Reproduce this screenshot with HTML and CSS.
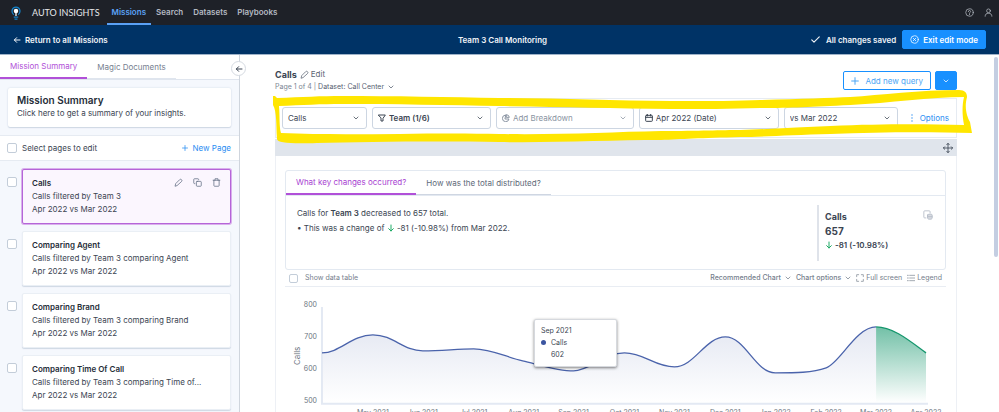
FILE: index.html
```
<!DOCTYPE html>
<html lang="en">
<head>
    <meta charset="UTF-8">
    <meta name="viewport" content="width=device-width, initial-scale=1.0">
    <title>Team 3 Call Monitoring</title>
    <link rel="stylesheet" href="styles.css">
</head>
<body>
    <svg class="sprite" aria-hidden="true">
        <symbol id="chevron" viewBox="0 0 24 24"><path d="M4 8l8 8 8-8"/></symbol>
        <symbol id="pencil" viewBox="0 0 24 24"><path d="M3 21l1.500-6L15 4.500a3.500 3.500 0 0 1 5 5L9 19.500z"/></symbol>
        <symbol id="arrow-left" viewBox="0 0 24 24"><path d="M21 12H4M11 5l-7 7 7 7"/></symbol>
        <symbol id="arrow-down" viewBox="0 0 24 24"><path d="M12 3v18M5 14l7 7 7-7"/></symbol>
        <symbol id="plus" viewBox="0 0 24 24"><path d="M12 2v20M2 12h20"/></symbol>
    </svg>

    <header class="topbar">
        <svg class="logo" viewBox="0 0 20 28" aria-hidden="true">
            <path d="M5.500 17.500C0 13 1 2 10 2s10 11 4.500 15.500" fill="none" stroke="#1482c8" stroke-width="2.500"/>
            <circle cx="10" cy="10" r="4.500" fill="#fff"/>
            <path d="M10 12v8" stroke="#fff" stroke-width="2.500"/>
            <path d="M5.500 22h9M7 26h6" stroke="#1482c8" stroke-width="2.500"/>
        </svg>
        <span class="brand">AUTO INSIGHTS</span>
        <nav class="nav">
            <a href="#" class="active">Missions</a>
            <a href="#">Search</a>
            <a href="#">Datasets</a>
            <a href="#">Playbooks</a>
        </nav>
        <div class="topbar-icons">
            <button type="button" aria-label="Help">
                <svg class="icon icon-m" viewBox="0 0 24 24"><circle cx="12" cy="12" r="10"/><path d="M9 9.500a3 3 0 1 1 4.500 2.500c-1 .6-1.500 1-1.500 2.200M12 17v1"/></svg>
            </button>
            <button type="button" aria-label="Account">
                <svg class="icon icon-m" viewBox="0 0 24 24"><circle cx="12" cy="7.500" r="5"/><path d="M3 22c0-5 3-8 9-8s9 3 9 8"/></svg>
            </button>
        </div>
    </header>

    <div class="missionbar">
        <a href="#" class="back"><svg class="icon icon-s"><use href="#arrow-left"/></svg>Return to all Missions</a>
        <h1>Team 3 Call Monitoring</h1>
        <div class="mission-actions">
            <span class="saved"><svg class="icon icon-m saved-tick" viewBox="0 0 24 24"><path d="M2 13l6 6L22 5"/></svg>All changes saved</span>
            <button type="button" class="btn btn-primary">
                <svg class="icon icon-m" viewBox="0 0 24 24"><circle cx="12" cy="12" r="10"/><path d="M8.500 8.500l7 7M15.500 8.500l-7 7"/></svg>Exit edit mode
            </button>
        </div>
    </div>

    <div class="layout">
        <aside class="sidebar">
            <button type="button" class="collapse" aria-label="Collapse sidebar"><svg class="icon icon-s"><use href="#arrow-left"/></svg></button>
            <div class="side-tabs">
                <button type="button" class="active">Mission Summary</button>
                <button type="button">Magic Documents</button>
            </div>
            <div class="summary">
                <a href="#" class="summary-card">
                    <strong>Mission Summary</strong>
                    <span>Click here to get a summary of your insights.</span>
                </a>
            </div>
            <div class="select-row">
                <label><input type="checkbox" class="check">Select pages to edit</label>
                <button type="button" class="link"><svg class="icon icon-xs"><use href="#plus"/></svg>New Page</button>
            </div>
            <ul class="pages">
                <li>
                    <input type="checkbox" class="check" aria-label="Select Calls">
                    <div class="page-card selected">
                        <h2>Calls</h2>
                        <p>Calls filtered by Team 3</p>
                        <p>Apr 2022 vs Mar 2022</p>
                        <div class="page-tools">
                            <button type="button" aria-label="Edit page"><svg class="icon icon-m"><use href="#pencil"/></svg></button>
                            <button type="button" aria-label="Duplicate page"><svg class="icon icon-m" viewBox="0 0 24 24"><rect x="9" y="9" width="13" height="13" rx="2"/><path d="M5 15H4a2 2 0 0 1-2-2V4a2 2 0 0 1 2-2h9a2 2 0 0 1 2 2v1"/></svg></button>
                            <button type="button" aria-label="Delete page"><svg class="icon icon-m" viewBox="0 0 24 24"><path d="M3 6h18M5 6v14a2 2 0 0 0 2 2h10a2 2 0 0 0 2-2V6M8 6V2h8v4"/></svg></button>
                        </div>
                    </div>
                </li>
                <li>
                    <input type="checkbox" class="check" aria-label="Select Comparing Agent">
                    <div class="page-card">
                        <h2>Comparing Agent</h2>
                        <p>Calls filtered by Team 3 comparing Agent</p>
                        <p>Apr 2022 vs Mar 2022</p>
                    </div>
                </li>
                <li>
                    <input type="checkbox" class="check" aria-label="Select Comparing Brand">
                    <div class="page-card">
                        <h2>Comparing Brand</h2>
                        <p>Calls filtered by Team 3 comparing Brand</p>
                        <p>Apr 2022 vs Mar 2022</p>
                    </div>
                </li>
                <li>
                    <input type="checkbox" class="check" aria-label="Select Comparing Time Of Call">
                    <div class="page-card">
                        <h2>Comparing Time Of Call</h2>
                        <p>Calls filtered by Team 3 comparing Time of...</p>
                        <p>Apr 2022 vs Mar 2022</p>
                    </div>
                </li>
            </ul>
        </aside>

        <main class="content">
            <div class="page-head">
                <div>
                    <div class="page-title">
                        <h2>Calls</h2>
                        <button type="button"><svg class="icon icon-m"><use href="#pencil"/></svg>Edit</button>
                    </div>
                    <div class="page-meta">Page 1 of 4 | <button type="button">Dataset: Call Center <svg class="icon icon-xs"><use href="#chevron"/></svg></button></div>
                </div>
                <div class="head-actions">
                    <button type="button" class="btn btn-outline"><svg class="icon icon-s"><use href="#plus"/></svg>Add new query</button>
                    <button type="button" class="btn btn-primary btn-more" aria-label="More"><svg class="icon icon-xs"><use href="#chevron"/></svg></button>
                </div>
            </div>

            <div class="query">
                <div class="field field-measure">
                    <select aria-label="Measure"><option>Calls</option></select>
                    <svg class="icon icon-xs"><use href="#chevron"/></svg>
                </div>
                <div class="field field-segment">
                    <svg class="icon icon-s" viewBox="0 0 24 24"><path d="M2 3h20l-7 10v8h-6v-8z"/></svg>
                    <select aria-label="Segment"><option>Team (1/6)</option></select>
                    <svg class="icon icon-xs"><use href="#chevron"/></svg>
                </div>
                <div class="field field-breakdown">
                    <svg class="icon icon-s" viewBox="0 0 24 24"><path d="M10 3A10 10 0 1 0 21 15H10z"/><path d="M14 2a9 9 0 0 1 8 8h-8z"/></svg>
                    <select aria-label="Breakdown"><option>Add Breakdown</option></select>
                    <svg class="icon icon-xs"><use href="#chevron"/></svg>
                </div>
                <div class="field field-period">
                    <svg class="icon icon-s" viewBox="0 0 24 24"><rect x="2" y="4" width="20" height="18" rx="2"/><path d="M2 10h20M7 1v5M17 1v5"/></svg>
                    <select aria-label="Period"><option>Apr 2022 (Date)</option></select>
                    <svg class="icon icon-xs"><use href="#chevron"/></svg>
                </div>
                <div class="field field-compare">
                    <select aria-label="Comparison"><option>vs Mar 2022</option></select>
                    <svg class="icon icon-xs"><use href="#chevron"/></svg>
                </div>
                <button type="button" class="link options"><svg class="icon icon-s" viewBox="0 0 24 24"><path d="M12 2v2M12 11v2M12 20v2"/></svg>Options</button>
                <svg class="marker" viewBox="0 0 704 54" preserveAspectRatio="none" aria-hidden="true">
                    <path d="M1 6L3 6L5 8C30 7 50 6 70 6C120 6 180 7 228 8C290 8 340 11 400 11C440 11 470 11 490 10C530 9 560 8 580 7C610 5 650 0 689 0C695 0 697 3 697 7C694 18 697 27 700 32L702 43C660 42 610 42 560 44C520 45 490 47 470 47C430 48 410 49 390 50C340 50 280 53 228 52C160 51 90 52 45 53C20 54 5 53 5 49C4 34 5 22 1 15ZM7 16C8 26 7 36 9 43C80 46 160 42 228 44C290 45 340 42 390 41C430 41 450 40 470 40C500 39 530 37 560 36C610 34 650 34 694 35C692 24 692 15 694 7C660 7 620 13 580 15C540 17 520 18 490 18C460 19 430 19 400 19C340 18 290 17 228 16C180 15 120 14 70 14C50 14 30 15 7 16Z"/>
                </svg>
            </div>

            <div class="drag-bar">
                <svg class="icon icon-l" viewBox="0 0 24 24"><path d="M12 1v22M1 12h22M9 4l3-3 3 3M9 20l3 3 3-3M4 9l-3 3 3 3M20 9l3 3-3 3"/></svg>
            </div>

            <section class="panel">
                <div class="insight">
                    <div class="insight-tabs">
                        <button type="button" class="active">What key changes occurred?</button>
                        <button type="button">How was the total distributed?</button>
                    </div>
                    <div class="insight-body">
                        <div class="insight-text">
                            <p>Calls for <b>Team 3</b> decreased to 657 total.</p>
                            <p>&bull; This was a change of <svg class="icon icon-s down"><use href="#arrow-down"/></svg> -81 (-10.98%) from Mar 2022.</p>
                        </div>
                        <div class="kpi">
                            <div>
                                <h3>Calls</h3>
                                <div class="kpi-value">657</div>
                                <div class="kpi-change"><svg class="icon icon-s down"><use href="#arrow-down"/></svg> -81 (-10.98%)</div>
                            </div>
                            <button type="button" class="kpi-copy" aria-label="Copy data">
                                <svg class="icon icon-l" viewBox="0 0 24 24"><path d="M7 19H4a2 2 0 0 1-2-2V4a2 2 0 0 1 2-2h11a2 2 0 0 1 2 2v3"/><path d="M11 12v8c0 3 11 3 11 0v-8c0-3-11-3-11 0z" fill="currentColor" fill-opacity=".5"/><path d="M11 16h11"/></svg>
                            </button>
                        </div>
                    </div>
                </div>

                <div class="chart-bar">
                    <label><input type="checkbox" class="check check-s">Show data table</label>
                    <div class="chart-tools">
                        <button type="button" class="strong">Recommended Chart <svg class="icon icon-xs"><use href="#chevron"/></svg></button>
                        <button type="button" class="strong">Chart options <svg class="icon icon-xs"><use href="#chevron"/></svg></button>
                        <button type="button"><svg class="icon icon-s thin" viewBox="0 0 24 24"><path d="M2 8V2h6M16 2h6v6M22 16v6h-6M8 22H2v-6"/></svg>Full screen</button>
                        <button type="button"><svg class="icon icon-s thin" viewBox="0 0 24 24"><path d="M8 4h15M8 12h15M8 20h15M1 4h3M1 12h3M1 20h3"/></svg>Legend</button>
                    </div>
                </div>

                <div class="chart">
                    <svg viewBox="0 0 662 140" role="img" aria-label="Calls by month">
                        <defs>
                            <linearGradient id="fill-calls" gradientUnits="userSpaceOnUse" x1="0" y1="38" x2="0" y2="116">
                                <stop offset="0" stop-color="#3b55a0" stop-opacity=".14"/>
                                <stop offset="1" stop-color="#3b55a0" stop-opacity="0"/>
                            </linearGradient>
                            <linearGradient id="fill-current" x1="0" y1="0" x2="0" y2="1">
                                <stop offset="0" stop-color="#14966c" stop-opacity=".6"/>
                                <stop offset="1" stop-color="#14966c" stop-opacity="0"/>
                            </linearGradient>
                        </defs>
                        <path fill="url(#fill-calls)" d="M37 66C55 66 67 48 88 48S118 64 138 64S172 62 189 62S221 70 238 74S273 84 289 84S320 66 340 66S370 80 390 80S421 50 441 50S471 86 491 86S528 86 542 81S572 40 592 40V116H37Z"/>
                        <path fill="url(#fill-current)" d="M592 40C610 40 628 56 642 66V116H592Z"/>
                        <path class="axis" d="M37 20V117H644"/>
                        <path class="line" d="M37 66C55 66 67 48 88 48S118 64 138 64S172 62 189 62S221 70 238 74S273 84 289 84S320 66 340 66S370 80 390 80S421 50 441 50S471 86 491 86S528 86 542 81S572 40 592 40"/>
                        <path class="line current" d="M592 40C610 40 628 56 642 66"/>
                        <g class="ticks-y">
                            <text x="32" y="20">800</text>
                            <text x="32" y="52">700</text>
                            <text x="32" y="84">600</text>
                            <text x="32" y="116">500</text>
                        </g>
                        <text class="axis-title" transform="translate(15 69) rotate(-90)">Calls</text>
                        <g class="ticks-x">
                            <text x="88" y="128">May 2021</text>
                            <text x="138" y="128">Jun 2021</text>
                            <text x="189" y="128">Jul 2021</text>
                            <text x="239" y="128">Aug 2021</text>
                            <text x="289" y="128">Sep 2021</text>
                            <text x="340" y="128">Oct 2021</text>
                            <text x="390" y="128">Nov 2021</text>
                            <text x="441" y="128">Dec 2021</text>
                            <text x="491" y="128">Jan 2022</text>
                            <text x="542" y="128">Feb 2022</text>
                            <text x="592" y="128">Mar 2022</text>
                            <text x="642" y="128">Apr 2022</text>
                        </g>
                    </svg>
                    <div class="tooltip">
                        <div>Sep 2021</div>
                        <div class="tooltip-name">Calls</div>
                        <div class="tooltip-value">602</div>
                    </div>
                </div>
            </section>
        </main>
        <div class="scrollbar"></div>
    </div>
</body>
</html>
```
FILE: styles.css
```
* {
    box-sizing: border-box;
}
body {
    display: flex;
    flex-direction: column;
    height: 100vh;
    margin: 0;
    overflow: hidden;
    font-family: Inter, "Liberation Sans", sans-serif;
    font-size: 8px;
    line-height: 12px;
    color: #3b4552;
    background: #fff;
}
h1, h2, h3, p, ul {
    margin: 0;
    padding: 0;
}
a {
    color: inherit;
    text-decoration: none;
}
button {
    display: inline-flex;
    align-items: center;
    padding: 0;
    border: 0;
    background: none;
    font: inherit;
    color: inherit;
    cursor: pointer;
}
.sprite {
    display: none;
}
.icon {
    flex: none;
    width: 10px;
    height: 10px;
    fill: none;
    stroke: currentColor;
    stroke-width: 2;
    stroke-linecap: round;
    stroke-linejoin: round;
}
.icon-xs {
    width: 6px;
    height: 6px;
    stroke-width: 3;
}
.icon-s {
    width: 8px;
    height: 8px;
    stroke-width: 3;
}
.icon-m {
    width: 9px;
    height: 9px;
}
.icon-l {
    width: 10px;
    height: 10px;
}
.thin {
    stroke-width: 2;
}

/* Top bars */
.topbar {
    display: flex;
    flex: none;
    align-items: center;
    height: 25px;
    padding: 0 6px 0 11px;
    background: #1e2128;
    color: #b4b9c2;
}
.logo {
    width: 10px;
    height: 14px;
}
.brand {
    margin: 0 7px 0 11px;
    font-family: Lato, sans-serif;
    font-size: 9px;
    color: #e6e8eb;
}
.nav {
    display: flex;
    align-self: stretch;
    font-weight: 600;
}
.nav a {
    padding: 6px 5px 0;
    border-bottom: 2px solid transparent;
}
.nav .active {
    color: #5ba1f5;
    border-color: #5ba1f5;
}
.topbar-icons {
    display: flex;
    gap: 10px;
    margin-left: auto;
}
.missionbar {
    display: grid;
    flex: none;
    grid-template-columns: 1fr auto 1fr;
    align-items: center;
    height: 30px;
    padding: 0 13px;
    border-bottom: 1px solid #9fb3c9;
    background: #003366;
    color: #f0f4f8;
    font-weight: 600;
}
.missionbar h1 {
    padding-left: 6px;
    font-size: 8px;
    font-weight: 600;
}
.back, .saved {
    display: flex;
    align-items: center;
    gap: 4px;
}
.saved {
    gap: 6px;
}
.saved-tick {
    stroke-width: 3;
}
.mission-actions {
    display: flex;
    justify-content: flex-end;
    gap: 6px;
}
.btn {
    height: 19px;
    padding: 0 7px;
    gap: 4px;
    border: 1px solid #1890ff;
    border-radius: 2px;
}
.btn-primary {
    background: #1890ff;
    color: #fff;
    font-weight: 600;
}
.btn-outline {
    background: #fff;
    color: #4aa5f5;
    gap: 6px;
}

/* Sidebar */
.layout {
    display: flex;
    flex: 1;
    min-height: 0;
}
.sidebar {
    position: relative;
    flex: none;
    width: 240px;
    border-right: 1px solid #cfd5dd;
    background: #f5f8fd;
}
.collapse {
    position: absolute;
    top: 6px;
    right: -7px;
    justify-content: center;
    width: 15px;
    height: 15px;
    border: 1px solid #d5dae1;
    border-radius: 50%;
    background: #fff;
}
.side-tabs {
    display: flex;
    height: 25px;
    border-bottom: 1px solid #dfe5ee;
    background: #fff;
    color: #76808f;
}
.side-tabs button {
    padding: 0 10px;
    border-bottom: 1px solid #dfe5ee;
}
.side-tabs .active {
    border-bottom: 2px solid #b150d8;
    color: #b150d8;
}
.summary {
    padding: 8px;
}
.summary-card {
    display: block;
    padding: 6px 9px 8px;
    border-radius: 2px;
    background: #fff;
    box-shadow: 0 0 2px #cfd8e4, 0 1px 1px #cfd8e4;
}
.summary-card strong {
    display: block;
    font-size: 10px;
    line-height: 13px;
    font-weight: 600;
    color: #252d38;
}
.select-row {
    display: flex;
    align-items: center;
    justify-content: space-between;
    height: 26px;
    padding: 0 8px 0 7px;
    border: solid #e6ebf2;
    border-width: 1px 0;
    background: #fff;
}
.select-row label, .chart-bar label {
    display: flex;
    align-items: center;
    gap: 5px;
}
.check {
    appearance: none;
    flex: none;
    width: 10px;
    height: 10px;
    margin: 0;
    border: 1px solid #c3cdd9;
    border-radius: 2px;
    background: #fff;
}
.check-s {
    width: 9px;
    height: 9px;
}
.link {
    gap: 4px;
    color: #2a8df2;
}
.pages {
    display: flex;
    flex-direction: column;
    gap: 7px;
    padding: 8px 8px 0 7px;
    list-style: none;
}
.pages li {
    display: flex;
    gap: 5px;
}
.pages .check {
    margin-top: 8px;
}
.page-card {
    position: relative;
    flex: 1;
    height: 55px;
    padding: 6px 9px;
    border: 1px solid #eaeff5;
    border-radius: 2px;
    background: #fff;
    box-shadow: 0 1px 1px #cfd8e4;
    line-height: 13px;
}
.page-card.selected {
    border-color: #b565d8;
    box-shadow: 0 0 0 1px #d9b0ec;
    background: #fbf6fe;
}
.page-card h2 {
    font-size: 8px;
    line-height: 14px;
    font-weight: 600;
    color: #252d38;
}
.page-tools {
    position: absolute;
    top: 8px;
    right: 9px;
    display: flex;
    gap: 10px;
    color: #5f6b80;
}

/* Page header */
.content {
    flex: 1;
    min-width: 0;
    padding: 13px 36px 0 35px;
}
.scrollbar {
    flex: none;
    width: 4px;
    height: 200px;
    margin: 2px 1px;
    border-radius: 2px;
    background: #c4cee2;
}
.page-head {
    display: flex;
    justify-content: space-between;
    align-items: flex-start;
}
.page-title {
    display: flex;
    align-items: center;
    gap: 3px;
    line-height: 13px;
}
.page-title h2 {
    font-size: 9px;
    font-weight: 700;
}
.page-title button {
    gap: 2px;
    color: #5c6674;
}
.page-meta {
    font-size: 7px;
    line-height: 11px;
    color: #7b8593;
}
.page-meta button {
    gap: 4px;
    color: #566070;
}
.head-actions {
    display: flex;
    gap: 4px;
    padding-top: 3px;
}

/* Query bar */
.query {
    position: relative;
    display: flex;
    align-items: center;
    gap: 5px;
    height: 40px;
    margin-top: 6px;
    padding: 0 7px 0 6px;
    border: 1px solid #e6ebf2;
}
.field {
    display: flex;
    align-items: center;
    flex: 1 1 114px;
    gap: 3px;
    min-width: 0;
    height: 22px;
    padding: 0 7px 0 5px;
    border: 1px solid #cdd6e2;
    border-radius: 3px;
    background: #fff;
}
.field-measure {
    flex-basis: 85px;
}
.field-segment {
    flex-basis: 119px;
    font-weight: 600;
}
.field-breakdown {
    flex-basis: 138px;
    color: #8a94a2;
}
.field-period {
    flex-basis: 140px;
}
.field select {
    appearance: none;
    flex: 1;
    min-width: 0;
    padding: 0;
    border: 0;
    background: none;
    font: inherit;
    color: inherit;
}
.options {
    margin-left: 5px;
}
/* hand-drawn highlighter around the query bar */
.marker {
    position: absolute;
    top: -9px;
    left: -4px;
    width: calc(100% + 22px);
    height: 54px;
    fill: #ffe600;
    pointer-events: none;
}
.drag-bar {
    display: flex;
    align-items: center;
    justify-content: flex-end;
    height: 17px;
    margin-top: 1px;
    padding-right: 4px;
    background: #e0e5ec;
}

/* Insight panel */
.panel {
    padding: 14px 10px 0 9px;
    border: solid #edf0f5;
    border-width: 0 1px;
}
.insight {
    border: 1px solid #e3e9f1;
    border-radius: 3px;
}
.insight-tabs {
    display: flex;
    height: 25px;
    border-bottom: 1px solid #e3e9f1;
    color: #5e6978;
}
.insight-tabs button {
    padding: 0 10px;
    border-bottom: 1px solid #cfd6e2;
}
.insight-tabs .active {
    border-bottom: 2px solid #b150d8;
    color: #a83fd2;
}
.insight-body {
    display: flex;
    justify-content: space-between;
    height: 73px;
    padding: 9px 12px 8px 11px;
}
.insight-text {
    padding-top: 1px;
    line-height: 15px;
}
.insight-text b {
    font-weight: 600;
}
.down {
    color: #1fab66;
    vertical-align: -1px;
}
.kpi {
    display: flex;
    justify-content: space-between;
    align-items: flex-start;
    width: 116px;
    padding-top: 5px;
    padding-left: 6px;
    border-left: 2px solid #dfe3ea;
    line-height: 14px;
    font-weight: 600;
}
.kpi h3, .kpi-value {
    font-size: 9px;
    font-weight: 700;
}
.kpi-value {
    font-size: 10px;
}
.kpi-copy {
    color: #b3bac6;
}
.chart-bar {
    display: flex;
    align-items: center;
    justify-content: space-between;
    height: 17px;
    padding: 0 4px;
    border-bottom: 1px solid #e9edf3;
    font-size: 7px;
    color: #76808d;
}
.chart-bar label {
    gap: 7px;
}
.chart-tools {
    display: flex;
    gap: 5px;
}
.chart-tools button {
    gap: 2px;
}
.chart-tools .strong {
    font-weight: 500;
    gap: 4px;
}

/* Chart */
.chart {
    position: relative;
}
.chart svg {
    display: block;
    width: 100%;
}
.chart text {
    font-size: 7px;
    fill: #6b7480;
}
.chart .axis-title {
    font-size: 8px;
}
.ticks-y {
    text-anchor: end;
}
.ticks-x, .axis-title {
    text-anchor: middle;
}
.axis {
    fill: none;
    stroke: #e3e9f3;
    stroke-width: 2;
}
.line {
    fill: none;
    stroke: #4a63ab;
    stroke-width: 1.3;
}
.current {
    stroke: #14966c;
}
.tooltip {
    position: absolute;
    top: 32px;
    left: 249px;
    width: 83px;
    padding: 5px 6px;
    border: 1px solid #d6d9de;
    border-radius: 2px;
    background: #fff;
    box-shadow: 0 1px 3px rgba(0, 0, 0, 0.5);
    font-size: 7px;
}
.tooltip-name::before {
    content: "";
    display: inline-block;
    width: 5px;
    height: 5px;
    margin-right: 5px;
    border-radius: 50%;
    background: #3b55a0;
}
.tooltip-value {
    padding-left: 10px;
}
```
